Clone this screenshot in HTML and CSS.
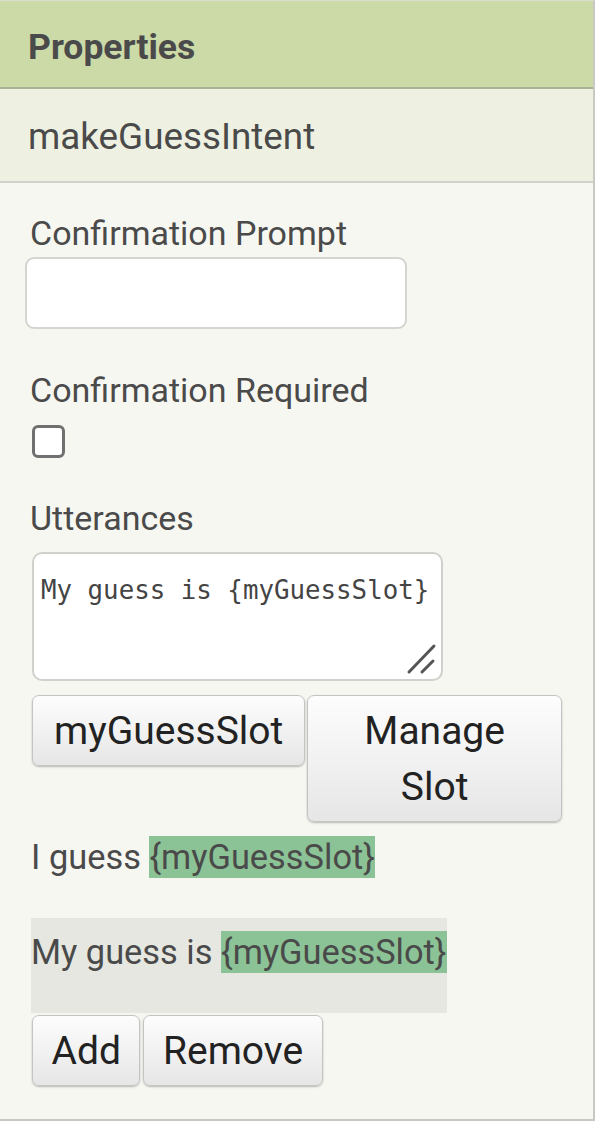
FILE: index.html
```html
<!DOCTYPE html>
<html>
<head>
<meta charset="utf-8">
<link rel="stylesheet" href="styles.css">
</head>
<body>
<div class="panel">
  <div class="panel-title">Properties</div>
  <div class="panel-sub">makeGuessIntent</div>
  <div class="panel-body">
    <div class="prop-label">Confirmation Prompt</div>
    <input class="text-input" type="text">
    <div class="prop-label label-gap">Confirmation Required</div>
    <span class="checkbox"></span>
    <div class="prop-label label-gap2">Utterances</div>
    <div class="textarea-wrap">
      <textarea class="utter-box">My guess is {myGuessSlot}</textarea>
      <svg class="grip" width="40" height="40" viewBox="0 0 40 40">
        <line x1="9" y1="31" x2="34" y2="5" stroke="#555" stroke-width="3" stroke-linecap="round"/>
        <line x1="22" y1="31" x2="33" y2="20" stroke="#555" stroke-width="3" stroke-linecap="round"/>
      </svg>
    </div>
    <div class="btn-row slot-row">
      <button class="btn btn-fixed">myGuessSlot</button>
      <button class="btn btn-shrink">Manage Slot</button>
    </div>
    <ul class="utter-list">
      <li class="utter-item">I guess <span class="slot">{myGuessSlot}</span></li>
      <li class="utter-item selected">My guess is <span class="slot">{myGuessSlot}</span></li>
    </ul>
    <div class="btn-row action-row">
      <button class="btn">Add</button>
      <button class="btn">Remove</button>
    </div>
  </div>
</div>
</body>
</html>
```
FILE: styles.css
```css
html, body {
  margin: 0;
  padding: 0;
  background: #ffffff;
}

body {
  font-family: Roboto, "Noto Sans", sans-serif;
  color: #454545;
}

.panel {
  box-sizing: border-box;
  width: 595px;
  height: 1121px;
  background: #f7f7f2;
  border-top: 1px solid #dcdcd4;
  border-right: 2px solid #c9c9c4;
  border-bottom: 2px solid #c9c9c4;
}

.panel-title {
  box-sizing: border-box;
  height: 88px;
  padding: 24px 0 0 28px;
  background: #cbdaa7;
  border-bottom: 2px solid #a7b297;
  font-weight: 700;
  font-size: 35.5px;
  line-height: 44px;
  color: #4a4a4a;
}

.panel-sub {
  box-sizing: border-box;
  height: 94px;
  padding: 26px 0 0 28px;
  background: #eef1e1;
  border-bottom: 2px solid #d1d2cb;
  font-size: 36.8px;
  line-height: 44px;
  color: #4a4a4a;
}

.panel-body {
  padding: 30px 0 0 30px;
}

.prop-label {
  font-size: 34px;
  line-height: 40px;
  color: #4a4a4a;
}

.label-gap {
  margin-top: 41px;
}

.label-gap2 {
  margin-top: 40px;
}

.text-input {
  display: block;
  box-sizing: border-box;
  width: 382px;
  height: 72px;
  margin: 4px 0 0 -5px;
  padding: 0 10px;
  background: #ffffff;
  border: 2px solid #d4d4d0;
  border-radius: 9px;
  outline: none;
}

.checkbox {
  display: block;
  box-sizing: border-box;
  width: 33px;
  height: 33px;
  margin: 15px 0 0 2px;
  background: #ffffff;
  border: 3px solid #707070;
  border-radius: 6px;
}

.textarea-wrap {
  position: relative;
  width: 411px;
  margin: 14px 0 0 2px;
}

.utter-box {
  display: block;
  box-sizing: border-box;
  width: 411px;
  height: 129px;
  margin: 0;
  padding: 21px 7px 20px;
  background: #ffffff;
  border: 2px solid #d0d0cc;
  border-radius: 10px;
  font-family: "DejaVu Sans Mono", "Liberation Mono", monospace;
  font-size: 25.8px;
  line-height: 30px;
  color: #444444;
  resize: none;
  outline: none;
  overflow: hidden;
}

.grip {
  position: absolute;
  right: 3px;
  bottom: 0;
}

.btn-row {
  display: flex;
  align-items: flex-start;
  gap: 2px;
  margin-left: 2px;
}

.slot-row {
  width: 530px;
  margin-top: 14px;
}

.btn {
  box-sizing: border-box;
  margin: 0;
  padding: 7px 19px 6px;
  background: linear-gradient(#fdfdfd, #e6e6e6);
  border: 1px solid #c4c4c4;
  border-radius: 7px;
  box-shadow: 0 1px 2px rgba(0, 0, 0, 0.25);
  font-family: Roboto, "Noto Sans", sans-serif;
  font-size: 39px;
  line-height: 56px;
  color: #222222;
  text-align: center;
}

.btn-fixed {
  flex: none;
  padding-left: 21px;
  padding-right: 21px;
}

.btn-shrink {
  flex: 1 1 auto;
  min-width: 0;
}

.utter-list {
  margin: 1px 0 0 1px;
  padding: 0;
  list-style: none;
}

.utter-item {
  width: fit-content;
  padding: 14px 0 41px;
  font-size: 34.4px;
  line-height: 40px;
  color: #4a4a4a;
}

.utter-item.selected {
  background: #e5e7e0;
}

.slot {
  padding: 1px 0;
  background: #8cc396;
}

.action-row {
  gap: 3px;
  margin-top: 2px;
}

.action-row .btn {
  padding-left: 18.5px;
  padding-right: 18.5px;
}
```
